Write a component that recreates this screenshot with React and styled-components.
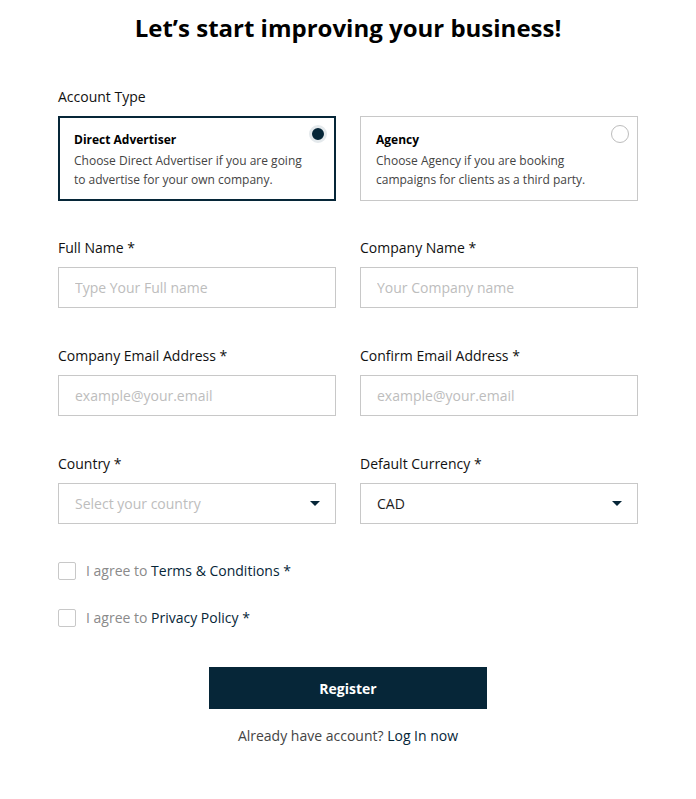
import React, { useState } from "react";
import styled, { createGlobalStyle } from "styled-components";

const GlobalStyle = createGlobalStyle`
  * { box-sizing: border-box; }
  body {
    margin: 0;
    background: #ffffff;
    font-family: "Open Sans", "Noto Sans", Arial, sans-serif;
    color: #1d1d1d;
  }
`;

const NAVY = "#062638";

const Page = styled.main`
  width: 580px;
  margin: 0 auto;
  padding: 12px 0 40px;
`;

const Title = styled.h1`
  margin: 0 0 43px;
  text-align: center;
  font-size: 24px;
  line-height: 32px;
  font-weight: 700;
  color: #000;
`;

const SectionLabel = styled.div`
  font-size: 14px;
  line-height: 20px;
  color: #111;
  margin-bottom: 9px;
`;

const CardRow = styled.div`
  display: grid;
  grid-template-columns: 278px 278px;
  column-gap: 24px;
  margin-bottom: 37px;
`;

const TypeCard = styled.label`
  position: relative;
  display: block;
  height: 85px;
  padding: 14px 40px 0 15px;
  border: 1px solid ${(p) => (p.$active ? NAVY : "#c8c8c8")};
  box-shadow: ${(p) => (p.$active ? `inset 0 0 0 1px ${NAVY}` : "none")};
  cursor: pointer;
`;

const CardTitle = styled.div`
  font-size: 12px;
  line-height: 18px;
  font-weight: 700;
  color: #000;
  margin-bottom: 2px;
`;

const CardText = styled.div`
  font-size: 12px;
  line-height: 19px;
  color: #444;
  width: 240px;
`;

const Radio = styled.span`
  position: absolute;
  top: 8px;
  right: 8px;
  width: 18px;
  height: 18px;
  border-radius: 50%;
  background: ${(p) => (p.$checked ? NAVY : "#fff")};
  border: ${(p) => (p.$checked ? "3px solid #e4e9ec" : "1px solid #bdbdbd")};
`;

const FieldGrid = styled.div`
  display: grid;
  grid-template-columns: 278px 278px;
  column-gap: 24px;
  row-gap: 38px;
  margin-bottom: 38px;
`;

const Field = styled.div`
  display: flex;
  flex-direction: column;
  gap: 9px;
`;

const FieldLabel = styled.label`
  font-size: 14px;
  line-height: 20px;
  color: #111;
`;

const TextInput = styled.input`
  height: 41px;
  width: 100%;
  padding: 0 16px;
  border: 1px solid #c8c8c8;
  border-radius: 0;
  font-family: inherit;
  font-size: 14px;
  color: #1d1d1d;
  outline: none;
  &::placeholder { color: #bdbdbd; }
`;

const SelectBox = styled.div`
  position: relative;
  height: 41px;
  display: flex;
  align-items: center;
  justify-content: space-between;
  padding: 0 15px 0 16px;
  border: 1px solid #c8c8c8;
  font-size: 14px;
  color: ${(p) => (p.$placeholder ? "#bdbdbd" : "#1d1d1d")};
  cursor: pointer;
`;

const Caret = styled.span`
  width: 0;
  height: 0;
  border-left: 5px solid transparent;
  border-right: 5px solid transparent;
  border-top: 5px solid ${NAVY};
`;

const Checks = styled.div`
  display: flex;
  flex-direction: column;
  gap: 29px;
  margin-bottom: 40px;
`;

const CheckRow = styled.label`
  display: flex;
  align-items: center;
  gap: 10px;
  font-size: 14px;
  line-height: 18px;
  color: #8a8a8a;
  cursor: pointer;
`;

const Box = styled.span`
  width: 18px;
  height: 18px;
  border: 1px solid #c8c8c8;
  border-radius: 2px;
  background: #fff;
`;

const Link = styled.a`
  color: ${NAVY};
  text-decoration: none;
`;

const Actions = styled.div`
  display: flex;
  flex-direction: column;
  align-items: center;
  gap: 17px;
`;

const Button = styled.button`
  width: 278px;
  height: 42px;
  border: none;
  background: ${NAVY};
  color: #fff;
  font-family: inherit;
  font-size: 14px;
  font-weight: 700;
  cursor: pointer;
`;

const Footer = styled.div`
  font-size: 14px;
  line-height: 20px;
  color: #444;
`;

const accountTypes = [
  {
    id: "direct",
    title: "Direct Advertiser",
    text: "Choose Direct Advertiser if you are going to advertise for your own company.",
  },
  {
    id: "agency",
    title: "Agency",
    text: "Choose Agency if you are booking campaigns for clients as a third party.",
  },
];

export default function App() {
  const [type, setType] = useState("direct");

  return (
    <>
      <GlobalStyle />
      <Page>
        <Title>Let’s start improving your business!</Title>

        <SectionLabel>Account Type</SectionLabel>
        <CardRow>
          {accountTypes.map((t) => (
            <TypeCard key={t.id} $active={type === t.id} onClick={() => setType(t.id)}>
              <CardTitle>{t.title}</CardTitle>
              <CardText>{t.text}</CardText>
              <Radio $checked={type === t.id} />
            </TypeCard>
          ))}
        </CardRow>

        <FieldGrid>
          <Field>
            <FieldLabel>Full Name *</FieldLabel>
            <TextInput placeholder="Type Your Full name" />
          </Field>
          <Field>
            <FieldLabel>Company Name *</FieldLabel>
            <TextInput placeholder="Your Company name" />
          </Field>
          <Field>
            <FieldLabel>Company Email Address *</FieldLabel>
            <TextInput placeholder="example@your.email" />
          </Field>
          <Field>
            <FieldLabel>Confirm Email Address *</FieldLabel>
            <TextInput placeholder="example@your.email" />
          </Field>
          <Field>
            <FieldLabel>Country *</FieldLabel>
            <SelectBox $placeholder>
              Select your country
              <Caret />
            </SelectBox>
          </Field>
          <Field>
            <FieldLabel>Default Currency *</FieldLabel>
            <SelectBox>
              CAD
              <Caret />
            </SelectBox>
          </Field>
        </FieldGrid>

        <Checks>
          <CheckRow>
            <Box />
            <span>
              I agree to <Link>Terms &amp; Conditions *</Link>
            </span>
          </CheckRow>
          <CheckRow>
            <Box />
            <span>
              I agree to <Link>Privacy Policy *</Link>
            </span>
          </CheckRow>
        </Checks>

        <Actions>
          <Button>Register</Button>
          <Footer>
            Already have account? <Link>Log In now</Link>
          </Footer>
        </Actions>
      </Page>
    </>
  );
}
